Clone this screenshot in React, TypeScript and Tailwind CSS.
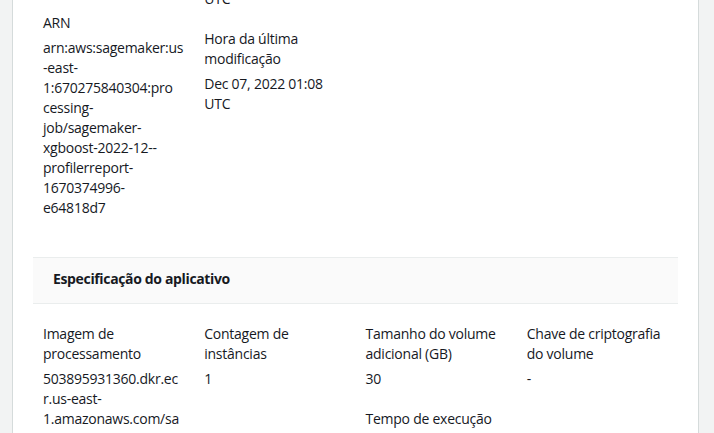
import React from "react";

interface Field {
  label: string;
  value?: React.ReactNode;
}

const topColumns: Field[][] = [
  [
    { label: "Status", value: "Completed" },
    {
      label: "ARN",
      value: (
        <>
          arn:aws:sagemaker:us-east-1:670275840304:pro<wbr />
          cessing-job/sagemaker-xgboost-2022-12--profilerreport-1670374996-e64818d7
        </>
      ),
    },
  ],
  [
    { label: "Hora de criação", value: "Dec 07, 2022 01:07 UTC" },
    { label: "Hora da última modificação", value: "Dec 07, 2022 01:08 UTC" },
  ],
  [],
  [],
];

const specColumns: Field[][] = [
  [
    {
      label: "Imagem de processamento",
      value: (
        <>
          503895931360.dkr.ec<wbr />
          r.us-east-1.amazonaws.com/sagemaker-debugger-rules:latest
        </>
      ),
    },
  ],
  [{ label: "Contagem de instâncias", value: "1" }],
  [
    { label: "Tamanho do volume adicional (GB)", value: "30" },
    { label: "Tempo de execução", value: "10 minutos" },
  ],
  [{ label: "Chave de criptografia do volume", value: "-" }],
];

const KeyValue = ({ label, value }: Field) => (
  <div>
    <div className="text-[#16191f]">{label}</div>
    <div className="mt-[5px] break-words text-[#16191f]">{value}</div>
  </div>
);

const Columns = ({ columns, firstOffset }: { columns: Field[][]; firstOffset?: boolean }) => (
  <div className="grid grid-cols-4 items-start">
    {columns.map((col, i) => (
      <div
        key={i}
        className={`flex min-w-0 flex-col gap-[20px] px-[10px] ${
          firstOffset && i === 0 ? "pt-[4px]" : ""
        }`}
      >
        {col.map((f) => (
          <KeyValue key={f.label} {...f} />
        ))}
      </div>
    ))}
  </div>
);

export default function App() {
  return (
    <div className="h-[433px] w-[714px] overflow-hidden bg-[#f2f3f3] font-['Open_Sans',sans-serif] text-[14px] leading-[20px] tracking-[-0.25px] text-[#16191f]">
      <div className="ml-[12px] mt-[-77px] w-[687px] border border-[#d5dbdb] bg-white px-[20px] pt-[20px] pb-[20px]">
        <Columns columns={topColumns} firstOffset />

        <div className="mt-[39px]">
          <div className="border-y border-[#eaeded] bg-[#fafafa] px-[20px] pt-[11px] pb-[14px]">
            <h2 className="text-[14px] font-bold leading-[20px] tracking-[-0.35px] text-[#16191f]">
              Especificação do aplicativo
            </h2>
          </div>
          <div className="pt-[20px]">
            <Columns columns={specColumns} />
          </div>
        </div>
      </div>
    </div>
  );
}
